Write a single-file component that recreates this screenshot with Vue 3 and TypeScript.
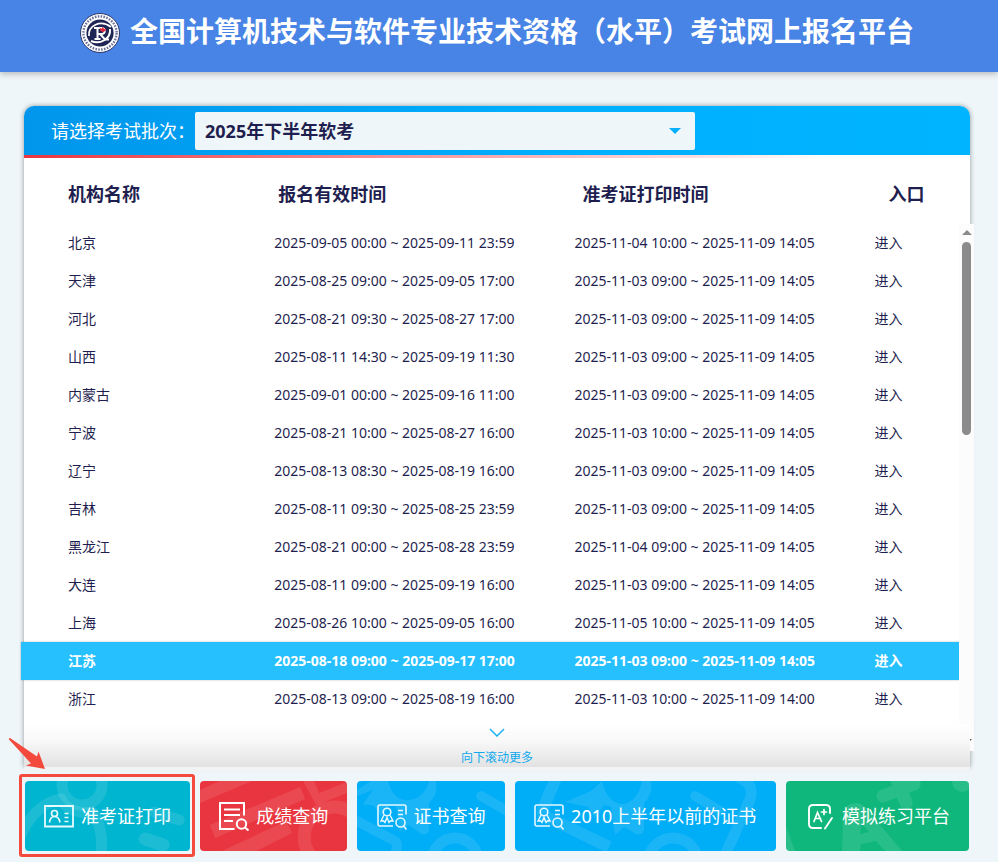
<script setup lang="ts">
import { ref } from 'vue'

interface Agency {
  name: string
  signup: string
  print: string
}

const batches: string[] = ['2025年下半年软考']
const batch = ref<string>(batches[0])
const active = ref<string>('江苏')

const agencies: Agency[] = [
  { name: '北京', signup: '2025-09-05 00:00 ~ 2025-09-11 23:59', print: '2025-11-04 10:00 ~ 2025-11-09 14:05' },
  { name: '天津', signup: '2025-08-25 09:00 ~ 2025-09-05 17:00', print: '2025-11-03 09:00 ~ 2025-11-09 14:05' },
  { name: '河北', signup: '2025-08-21 09:30 ~ 2025-08-27 17:00', print: '2025-11-03 09:00 ~ 2025-11-09 14:05' },
  { name: '山西', signup: '2025-08-11 14:30 ~ 2025-09-19 11:30', print: '2025-11-03 09:00 ~ 2025-11-09 14:05' },
  { name: '内蒙古', signup: '2025-09-01 00:00 ~ 2025-09-16 11:00', print: '2025-11-03 09:00 ~ 2025-11-09 14:05' },
  { name: '宁波', signup: '2025-08-21 10:00 ~ 2025-08-27 16:00', print: '2025-11-03 10:00 ~ 2025-11-09 14:05' },
  { name: '辽宁', signup: '2025-08-13 08:30 ~ 2025-08-19 16:00', print: '2025-11-03 09:00 ~ 2025-11-09 14:05' },
  { name: '吉林', signup: '2025-08-11 09:30 ~ 2025-08-25 23:59', print: '2025-11-03 09:00 ~ 2025-11-09 14:05' },
  { name: '黑龙江', signup: '2025-08-21 00:00 ~ 2025-08-28 23:59', print: '2025-11-04 09:00 ~ 2025-11-09 14:05' },
  { name: '大连', signup: '2025-08-11 09:00 ~ 2025-09-19 16:00', print: '2025-11-03 09:00 ~ 2025-11-09 14:05' },
  { name: '上海', signup: '2025-08-26 10:00 ~ 2025-09-05 16:00', print: '2025-11-05 10:00 ~ 2025-11-09 14:05' },
  { name: '江苏', signup: '2025-08-18 09:00 ~ 2025-09-17 17:00', print: '2025-11-03 09:00 ~ 2025-11-09 14:05' },
  { name: '浙江', signup: '2025-08-13 09:00 ~ 2025-08-19 16:00', print: '2025-11-03 10:00 ~ 2025-11-09 14:00' },
]
</script>

<template>
  <header class="top">
    <svg class="logo" viewBox="0 0 40 40" aria-hidden="true">
      <circle cx="20" cy="20" r="19.5" fill="#fff" stroke="#2a3568" stroke-width="1" />
      <circle cx="20" cy="20" r="16.6" fill="none" stroke="#6a7199" stroke-width="2.4" stroke-dasharray="1.6 1.3" />
      <circle cx="20" cy="20" r="13.6" fill="#1f2554" />
      <path d="M9 23C8 13 20 6 31 14" fill="none" stroke="#fff" stroke-width="1.8" />
      <path d="M11 28C20 32 31 26 30 16" fill="none" stroke="#fff" stroke-width="2" />
      <path d="M14 15h7c5 0 5 6 0 6h-3M17.500 15v11M14.500 26h6M20 21l5 5.500h4" fill="none" stroke="#fff" stroke-width="2" />
      <path d="M19.500 14.500l2 1.200 1.500-1.700 1 2 2-.3-.8 2.300-2.200 1-2.500-1z" fill="#e42c3c" />
    </svg>
    <h1>全国计算机技术与软件专业技术资格（水平）考试网上报名平台</h1>
  </header>

  <main class="page">
    <section class="card">
      <div class="batch">
        <label for="batch">请选择考试批次：</label>
        <div class="picker">
          <select id="batch" v-model="batch">
            <option v-for="b in batches" :key="b" :value="b">{{ b }}</option>
          </select>
          <svg class="caret" viewBox="0 0 12 6" aria-hidden="true"><path d="M0 0h12L6 6z" fill="#00b0ff" /></svg>
        </div>
      </div>
      <div class="rule"></div>

      <div class="pane">
        <table>
          <colgroup>
            <col class="c-name" />
            <col class="c-time" />
            <col class="c-time" />
            <col class="c-link" />
          </colgroup>
          <thead>
            <tr>
              <th scope="col">机构名称</th>
              <th scope="col">报名有效时间</th>
              <th scope="col">准考证打印时间</th>
              <th scope="col">入口</th>
            </tr>
          </thead>
          <tbody>
            <tr v-for="a in agencies" :key="a.name" :class="{ on: a.name === active }" @mouseenter="active = a.name">
              <td>{{ a.name }}</td>
              <td>{{ a.signup }}</td>
              <td>{{ a.print }}</td>
              <td><a href="#">进入</a></td>
            </tr>
          </tbody>
        </table>
        <div class="track" aria-hidden="true">
          <svg viewBox="0 0 10 5"><path d="M0 5h10L5 0z" fill="#8b8b8b" /></svg>
          <div class="thumb"></div>
          <svg viewBox="0 0 10 5"><path d="M0 0h10L5 5z" fill="#555" /></svg>
        </div>
      </div>

      <div class="more">
        <svg viewBox="0 0 16 9" aria-hidden="true"><path d="M1 1l7 7 7-7" fill="none" stroke="#1cb0f0" stroke-width="1.500" /></svg>
        <span>向下滚动更多</span>
      </div>
    </section>

    <nav class="actions">
      <div class="cell admit">
        <button type="button" class="btn teal">
          <svg class="art" viewBox="0 0 165 70" preserveAspectRatio="xMidYMid slice" aria-hidden="true">
            <g fill="none" stroke="#fff" stroke-opacity=".11" stroke-width="11" stroke-linecap="round">
              <circle cx="57" cy="4" r="20" />
              <path d="M-3 52C5 34 20 20 36 18C39 27 54 34 67 31C74 40 78 52 76 76" stroke-linejoin="round" />
              <path d="M120 58l18 6" stroke-width="13" />
              <path d="M129 31l25 8" />
            </g>
          </svg>
          <svg class="ico" viewBox="0 0 30 30" aria-hidden="true" fill="none" stroke="#e8fbff">
            <path d="M1 5h28v20.500H1z" stroke-width="1.800" />
            <circle cx="10.500" cy="12.500" r="3" stroke-width="1.700" />
            <path d="M5.500 21.500c1-8 9-8 10.500 0" stroke-width="1.700" />
            <path d="M20.500 12.500h4M20.500 16.500h4M20.500 20.500h4" stroke-width="1.400" />
          </svg>
          <span>准考证打印</span>
        </button>
        <div class="frame"></div>
        <svg class="arrow" viewBox="0 0 36 32" aria-hidden="true"><path d="M1 0Q-1 0 .5 2L22 25.500 17 27.500 36 31 29.500 13.500 28 18.500z" fill="#f44a3e" /></svg>
      </div>

      <div class="cell small">
        <button type="button" class="btn red">
          <svg class="art" viewBox="0 0 147 70" preserveAspectRatio="xMidYMid slice" aria-hidden="true">
            <g fill="#fff" fill-opacity=".1">
              <path d="M0 9L20 0H52L0 22zM10 44L100 6 105 18 15 57zM22 70L86 40 92 52 56 70zM103 0H114L119 12 147 1V12L116 24z" />
            </g>
            <circle cx="134" cy="56" r="30" fill="none" stroke="#fff" stroke-opacity=".1" stroke-width="13" />
          </svg>
          <svg class="ico" viewBox="0 0 30 30" aria-hidden="true" fill="none" stroke="#fff" stroke-width="2">
            <path d="M25 14.500V2H1v26h14.500M5 8.500h16M5 14h16M5 20h9" />
            <circle cx="22.500" cy="23" r="4.700" />
            <path d="M26 26.500l3.500 3" />
          </svg>
          <span>成绩查询</span>
        </button>
      </div>

      <div class="cell small">
        <button type="button" class="btn blue">
          <svg class="art" viewBox="0 0 147 70" preserveAspectRatio="xMidYMid slice" aria-hidden="true">
            <g fill="#fff" fill-opacity=".1">
              <path d="M0 9L14 0H31Q36 20 51 19 67 18 72 0H79Q81 14 72 22V49Q70 55 64 53L52 44 43 50 39 25 33 24 24 36 17 25 6 23 16 9 0 15z" />
            </g>
            <g fill="none" stroke="#fff" stroke-opacity=".1">
              <path d="M-4 38L38 60Q42 63 38 72" stroke-width="10" />
              <path d="M124 15l26 15" stroke-width="10" stroke-linecap="round" />
              <circle cx="98" cy="80" r="23" stroke-width="11" />
            </g>
          </svg>
          <svg class="ico" viewBox="0 0 30 30" aria-hidden="true" fill="none" stroke="#e6f7ff" stroke-width="1.600">
            <path d="M29 13.500V6q0-2-2-2H3Q1 4 1 6v17q0 2 2 2h13" />
            <circle cx="10" cy="11" r="3.800" />
            <path d="M7 14l-3 6 2.500-.3L8 21.500l2-5 2 5 1.500-1.800 2.500.3-3-6M21 9.500h5M21 13.500h5" stroke-width="1.400" />
            <circle cx="23.500" cy="21.500" r="4.500" />
            <path d="M26.500 25l3 3.500" />
          </svg>
          <span>证书查询</span>
        </button>
      </div>

      <div class="cell legacy">
        <button type="button" class="btn blue">
          <svg class="art" viewBox="0 0 261 70" preserveAspectRatio="xMidYMid slice" aria-hidden="true">
            <g fill="#fff" fill-opacity=".1">
              <path d="M50 21L76 10 87 0Q92 22 107 23 122 22 127 0H136Q138 14 129 22V49Q127 55 121 53L109 46 100 54 96 26 89 24 80 37 73 26z" />
            </g>
            <g fill="none" stroke="#fff" stroke-opacity=".1">
              <path d="M41 -3L28 28Q26 33 32 36L94 66" stroke-width="12" />
              <path d="M222 -4Q240 2 235 18L210 74" stroke-width="11" />
              <path d="M180 15l25 15" stroke-width="10" stroke-linecap="round" />
              <circle cx="158" cy="82" r="25" stroke-width="11" />
            </g>
          </svg>
          <svg class="ico" viewBox="0 0 30 30" aria-hidden="true" fill="none" stroke="#e6f7ff" stroke-width="1.600">
            <path d="M29 13.500V6q0-2-2-2H3Q1 4 1 6v17q0 2 2 2h13" />
            <circle cx="10" cy="11" r="3.800" />
            <path d="M7 14l-3 6 2.500-.3L8 21.500l2-5 2 5 1.500-1.800 2.500.3-3-6M21 9.500h5M21 13.500h5" stroke-width="1.400" />
            <circle cx="23.500" cy="21.500" r="4.500" />
            <path d="M26.500 25l3 3.500" />
          </svg>
          <span>2010上半年以前的证书</span>
        </button>
      </div>

      <div class="cell mock">
        <button type="button" class="btn green">
          <svg class="art" viewBox="0 0 183 70" preserveAspectRatio="xMidYMid slice" aria-hidden="true">
            <path d="M97 15L128 3M108 -8L120 22" fill="none" stroke="#fff" stroke-opacity=".1" stroke-width="13" stroke-linecap="round" />
            <path d="M56 70L57 32Q60 21 71 22Q78 23 82 30L116 70H99L90 60 75 63 74 70zM75 42L74 53 83 51z" fill="#fff" fill-opacity=".1" fill-rule="evenodd" />
            <circle cx="176" cy="1" r="10" fill="#fff" fill-opacity=".1" />
            <path d="M0 46L9 70H0z" fill="#fff" fill-opacity=".1" />
          </svg>
          <svg class="ico" viewBox="0 0 30 30" aria-hidden="true" fill="none" stroke="#fff" stroke-width="1.900" stroke-linecap="round">
            <path d="M25 12V8q0-4-4-4H8Q4 4 4 8v15q0 4 4 4h8M27 17l-7 10.500" />
            <path d="M9 20.500l3.500-9 4 9M10.500 17.500h5M16.500 11h5M19 8.500v5" stroke-width="1.700" />
          </svg>
          <span>模拟练习平台</span>
        </button>
      </div>
    </nav>
  </main>
</template>

<style>
body {
  margin: 0;
  background: #eef6f9;
}
</style>

<style scoped>
.top,
.page,
.page button,
.page select {
  font-family: "Noto Sans", "Noto Sans CJK SC", sans-serif;
}
.top {
  display: flex;
  align-items: center;
  justify-content: center;
  gap: 10px;
  box-sizing: border-box;
  height: 72px;
  padding: 0 4px 7px 0;
  background: #4884e5;
  box-shadow: 0 2px 6px rgba(0, 0, 0, 0.25);
}
.logo {
  width: 40px;
  height: 40px;
}
h1 {
  margin: 0;
  padding-bottom: 4px;
  font-size: 28px;
  line-height: 40px;
  font-weight: 700;
  color: #fff;
  white-space: nowrap;
}
.page {
  padding: 34px 28px 11px 24px;
  color: #1f1f4f;
}
.card {
  border-radius: 10px 10px 0 0;
  background: #fff;
  box-shadow: 0 0 5px rgba(0, 0, 0, 0.4);
}
.batch {
  display: flex;
  align-items: center;
  box-sizing: border-box;
  height: 49px;
  padding-left: 27px;
  border-radius: 10px 10px 0 0;
  background: linear-gradient(90deg, #0096ec, #00b0ff 60%, #00b4ff);
}
.batch label {
  font-size: 18px;
  line-height: 24px;
  color: #fff;
  white-space: nowrap;
}
.picker {
  display: grid;
  align-items: center;
  flex: 0 1 500px;
}
.picker select,
.caret {
  grid-area: 1 / 1;
}
.picker select {
  width: 100%;
  height: 38px;
  padding: 0 10px;
  border: 0;
  border-radius: 2px;
  appearance: none;
  background: #eef6f9;
  color: #1f1f4f;
  font-size: 18px;
  font-weight: 700;
}
.caret {
  justify-self: end;
  width: 12px;
  height: 6px;
  margin-right: 14px;
  pointer-events: none;
}
.rule {
  height: 3px;
  background: linear-gradient(90deg, #ea3640, #fff 85%);
}
.pane {
  display: flex;
  height: 593px;
  margin: 0 -4px 0 -3px;
}
table {
  flex: 1;
  align-self: flex-start;
  table-layout: fixed;
  border-collapse: collapse;
}
.c-name {
  width: 27%;
}
.c-time {
  width: 32%;
}
.c-link {
  width: 9%;
}
th {
  height: 60px;
  padding: 6px 0 0;
  font-size: 18px;
  line-height: 24px;
  text-align: left;
  white-space: nowrap;
}
th:nth-child(2) {
  padding-left: 4px;
}
th:nth-child(3) {
  padding-left: 8px;
}
th:nth-child(4) {
  padding-left: 14px;
}
td {
  height: 38px;
  padding: 0;
  font-size: 14px;
  line-height: 20px;
  white-space: nowrap;
}
th:first-child,
td:first-child {
  padding-left: 47px;
}
td a {
  color: inherit;
  text-decoration: none;
}
.on {
  background: #27c0ff;
  box-shadow: 0 0 2px rgba(0, 0, 0, 0.25);
  color: #fff;
  font-weight: 700;
}
.track {
  display: flex;
  flex-direction: column;
  align-items: center;
  box-sizing: border-box;
  width: 15px;
  margin-top: 66px;
  padding: 6px 0 7px;
  background: #fcfcfc;
}
.track svg {
  width: 10px;
  height: 5px;
}
.track svg:last-child {
  margin-top: auto;
}
.thumb {
  width: 9px;
  height: 193px;
  margin-top: 7px;
  border-radius: 5px;
  background: #8b8b8b;
}
.more {
  position: relative;
  display: flex;
  flex-direction: column;
  align-items: center;
  gap: 13px;
  box-sizing: border-box;
  height: 43px;
  margin-top: -27px;
  padding-top: 4px;
  background: linear-gradient(#fff, #f8f8f8 40%, #e2e2e2);
  box-shadow: 0 4px #f1f3f4;
}
.more svg {
  width: 16px;
  height: 9px;
}
.more span {
  font-size: 12px;
  line-height: 16px;
  color: #0fa9ee;
}
.actions {
  display: flex;
  gap: 10px;
  margin: 14px 1px 0;
}
.cell {
  position: relative;
  flex: 1 1 165px;
}
.small {
  flex-basis: 147px;
}
.legacy {
  flex-basis: 261px;
}
.mock {
  flex-basis: 183px;
}
.btn {
  position: relative;
  display: flex;
  align-items: center;
  justify-content: center;
  gap: 7px;
  width: 100%;
  height: 70px;
  padding: 0;
  border: 0;
  border-radius: 4px;
  overflow: hidden;
  color: #fff;
  font-size: 18px;
  line-height: 24px;
  white-space: nowrap;
  cursor: pointer;
}
.teal {
  background: #00b5cf;
}
.red {
  background: #e9353f;
}
.blue {
  background: #00adf7;
}
.green {
  background: #10b77d;
}
.art {
  position: absolute;
  inset: 0;
  width: 100%;
  height: 100%;
}
.ico {
  position: relative;
  flex: none;
  width: 30px;
  height: 30px;
}
.btn span {
  position: relative;
}
.frame {
  position: absolute;
  inset: -7px -5px -6px -6px;
  border: 3px solid #f44a3e;
  border-radius: 3px;
  pointer-events: none;
}
.arrow {
  position: absolute;
  left: -16px;
  top: -43px;
  width: 36px;
  height: 32px;
}
</style>
